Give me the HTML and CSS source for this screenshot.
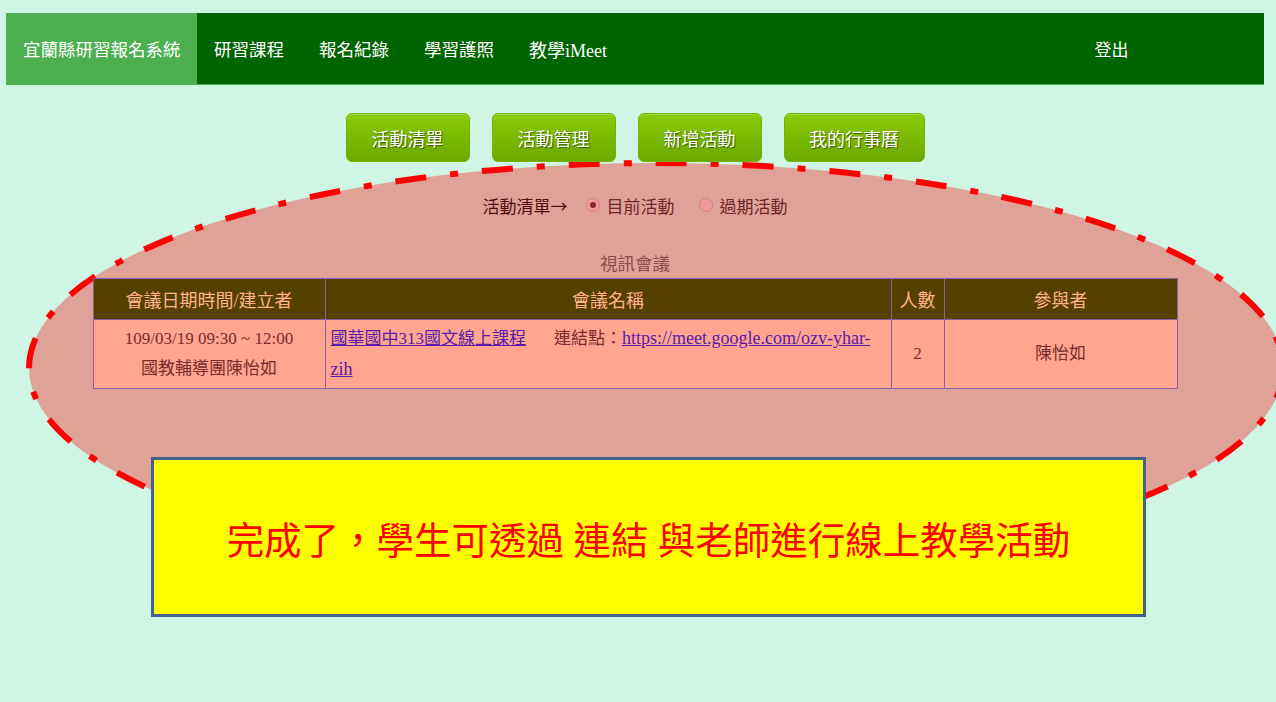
FILE: index.html
```html
<!DOCTYPE html>
<html lang="zh-Hant">
<head>
    <meta charset="UTF-8">
    <meta name="viewport" content="width=device-width, initial-scale=1.0">
    <title>宜蘭縣研習報名系統 - 活動清單</title>
    <link rel="stylesheet" href="styles.css">
</head>
<body>
    <!-- highlight ring drawn behind the list -->
    <svg class="highlight" width="1276" height="702" viewBox="0 0 1276 702">
        <ellipse cx="656" cy="368" rx="627" ry="205" fill="#dea396" stroke="#ff0000" stroke-width="6" stroke-dasharray="31 24 8 24"></ellipse>
    </svg>

    <div class="page">
        <header class="navbar">
            <a class="brand" href="#">宜蘭縣研習報名系統</a>
            <nav class="nav-links">
                <a href="#">研習課程</a>
                <a href="#">報名紀錄</a>
                <a href="#">學習護照</a>
                <a href="#">教學iMeet</a>
            </nav>
            <a class="logout" href="#">登出</a>
        </header>

        <div class="toolbar">
            <button class="green-btn">活動清單</button>
            <button class="green-btn">活動管理</button>
            <button class="green-btn">新增活動</button>
            <button class="green-btn wide">我的行事曆</button>
        </div>

        <div class="filter-row">
            <span class="filter-label">活動清單→</span>
            <label class="radio"><span class="dot checked"></span>目前活動</label>
            <label class="radio"><span class="dot"></span>過期活動</label>
        </div>

        <table class="meeting-table">
            <caption>視訊會議</caption>
            <colgroup>
                <col class="col-date">
                <col class="col-name">
                <col class="col-count">
                <col class="col-people">
            </colgroup>
            <thead>
                <tr>
                    <th>會議日期時間/建立者</th>
                    <th>會議名稱</th>
                    <th>人數</th>
                    <th>參與者</th>
                </tr>
            </thead>
            <tbody>
                <tr>
                    <td class="center">109/03/19 09:30 ~ 12:00<br>國教輔導團陳怡如</td>
                    <td class="name-cell"><a href="#">國華國中313國文線上課程</a><span class="link-label">連結點：</span><a class="meet-url" href="#">https://meet.google.com/ozv-yhar-zih</a></td>
                    <td class="center">2</td>
                    <td class="center">陳怡如</td>
                </tr>
            </tbody>
        </table>

        <div class="notice">完成了，學生可透過 連結 與老師進行線上教學活動</div>
    </div>
</body>
</html>
```

FILE: styles.css
```css
body {
    margin: 0;
    padding: 0;
    background-color: #cff5e4;
    font-family: "Liberation Serif", "Noto Sans CJK TC", serif;
    overflow: hidden;
}

.highlight {
    position: absolute;
    top: 0;
    left: 0;
    z-index: 0;
    pointer-events: none;
}

.page {
    position: relative;
    z-index: 1;
    margin: 13px 12px 0 6px;
}

/* top navigation */
.navbar {
    display: flex;
    align-items: stretch;
    height: 71px;
    background-color: #006400;
    border-bottom: 1px solid #4fb04f;
}

.navbar a {
    color: #ffffff;
    text-decoration: none;
    display: flex;
    align-items: center;
}

.brand {
    background-color: #4caf50;
    padding: 0 16px 0 17px;
    font-size: 17.5px;
    color: #f2fbe8;
}

.nav-links {
    display: flex;
}

.nav-links a {
    padding: 0 17.5px;
    font-size: 17.5px;
}

.nav-links a:last-child {
    font-size: 18px;
}

.logout {
    margin-left: auto;
    margin-right: 118px;
    padding: 0 17.5px;
    font-size: 17px;
}

/* green tab buttons */
.toolbar {
    display: flex;
    justify-content: center;
    gap: 22px;
    margin-top: 28px;
}

.green-btn {
    width: 124px;
    height: 49px;
    font-family: inherit;
    font-size: 18px;
    color: #ffffff;
    text-shadow: 1px 1px 1px #3d5d00;
    background: linear-gradient(#8ccb06, #6aa800);
    border: 1px solid #78b300;
    border-radius: 6px;
    box-shadow: inset 0 1px 0 #a5d83a;
    cursor: pointer;
}

.green-btn.wide {
    width: 141px;
}

.filter-row {
    display: flex;
    justify-content: center;
    align-items: center;
    gap: 24px;
    margin-top: 28px;
    height: 30px;
    font-size: 17px;
    color: #6e2626;
}

.filter-label {
    font-family: "Noto Sans CJK TC", sans-serif;
    color: #4f0f0f;
    margin-right: -6px;
}

.radio {
    display: flex;
    align-items: center;
    gap: 7px;
}

.dot {
    width: 12px;
    height: 12px;
    border-radius: 50%;
    background-color: #ec9a9a;
    border: 1px solid #d27f80;
    display: flex;
    align-items: center;
    justify-content: center;
}

.dot.checked::after {
    content: "";
    width: 6px;
    height: 6px;
    border-radius: 50%;
    background-color: #8b2a2a;
}

/* meeting list */
.meeting-table {
    width: 1084px;
    margin: 30px auto 0;
    border-collapse: collapse;
    table-layout: fixed;
    font-size: 17px;
}

.meeting-table caption {
    color: #8c4c4c;
    font-size: 17.5px;
    height: 28px;
    line-height: 28px;
}

.col-date { width: 232px; }
.col-name { width: 566px; }
.col-count { width: 53px; }
.col-people { width: 233px; }

.meeting-table th {
    background-color: #554000;
    color: #ffb38c;
    font-weight: normal;
    font-size: 18px;
    height: 40px;
    padding: 0;
    border: 1px solid #8e5fa0;
}

.meeting-table td {
    background-color: #ffa590;
    color: #7a2c2c;
    border: 1px solid #8e5fa0;
    line-height: 30px;
    padding: 3px 5px;
    vertical-align: middle;
}

.center {
    text-align: center;
}

.name-cell a {
    color: #5a1ca8;
}

.name-cell .meet-url {
    font-size: 18px;
}

.link-label {
    margin-left: 28px;
}

/* callout box */
.notice {
    width: 989px;
    height: 154px;
    margin: 68px 0 0 145px;
    background-color: #ffff00;
    border: 3px solid #41628f;
    color: #ff0000;
    font-size: 37.5px;
    display: flex;
    align-items: center;
    justify-content: center;
}
```
